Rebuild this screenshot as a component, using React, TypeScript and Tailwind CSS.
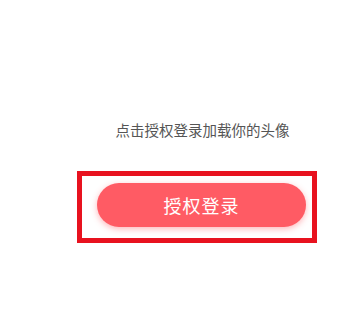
export default function App() {
  return (
    <div
      className="w-[351px] h-[316px] bg-white flex flex-col"
      style={{ fontFamily: '"Noto Sans CJK SC", "Noto Sans", sans-serif' }}
    >
      <div className="pt-[119px] pl-[54px] flex justify-center">
        <span className="text-[14.5px] leading-[22px] text-[#555555]">点击授权登录加载你的头像</span>
      </div>
      <div className="mt-[30px] ml-[77px] w-[240px] h-[72px] border-[5px] border-[#e8121f] pt-[7px] pl-[15px]">
        <button className="w-[209px] h-[44px] rounded-full bg-[#ff5b64] text-white text-[18px] tracking-[1px] flex items-center justify-center shadow-[0_2px_6px_rgba(255,91,100,0.45)]">
          授权登录
        </button>
      </div>
    </div>
  );
}
